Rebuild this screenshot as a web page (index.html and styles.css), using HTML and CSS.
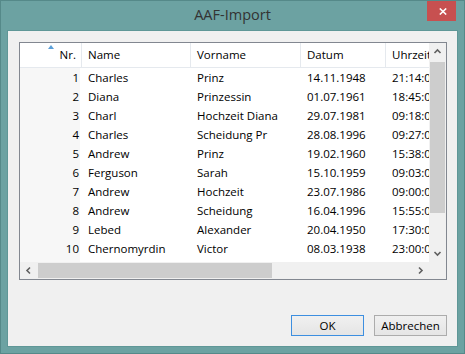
FILE: index.html
```html
<!DOCTYPE html>
<html>
<head>
<meta charset="utf-8">
<link rel="stylesheet" href="styles.css">
</head>
<body>
<div class="window">
  <div class="titlebar">
    <span class="title">AAF-Import</span>
    <button class="close" aria-label="Schließen">
      <svg width="8" height="7" viewBox="0 0 8 7"><path d="M0.8 0.5 L7.2 6.5 M7.2 0.5 L0.8 6.5" stroke="#fff" stroke-width="1.6" fill="none"/></svg>
    </button>
  </div>
  <div class="client">
    <div class="list">
      <div class="list-main">
        <div class="viewport">
          <div class="row header">
            <div class="cell nr">Nr.<span class="sort"></span></div>
            <div class="cell">Name</div>
            <div class="cell">Vorname</div>
            <div class="cell">Datum</div>
            <div class="cell">Uhrzeit</div>
          </div>
          <div class="row"><div class="cell nr">1</div><div class="cell">Charles</div><div class="cell">Prinz</div><div class="cell">14.11.1948</div><div class="cell">21:14:00</div></div>
          <div class="row"><div class="cell nr">2</div><div class="cell">Diana</div><div class="cell">Prinzessin</div><div class="cell">01.07.1961</div><div class="cell">18:45:00</div></div>
          <div class="row"><div class="cell nr">3</div><div class="cell">Charl</div><div class="cell">Hochzeit Diana</div><div class="cell">29.07.1981</div><div class="cell">09:18:00</div></div>
          <div class="row"><div class="cell nr">4</div><div class="cell">Charles</div><div class="cell">Scheidung Pr</div><div class="cell">28.08.1996</div><div class="cell">09:27:00</div></div>
          <div class="row"><div class="cell nr">5</div><div class="cell">Andrew</div><div class="cell">Prinz</div><div class="cell">19.02.1960</div><div class="cell">15:38:00</div></div>
          <div class="row"><div class="cell nr">6</div><div class="cell">Ferguson</div><div class="cell">Sarah</div><div class="cell">15.10.1959</div><div class="cell">09:03:00</div></div>
          <div class="row"><div class="cell nr">7</div><div class="cell">Andrew</div><div class="cell">Hochzeit</div><div class="cell">23.07.1986</div><div class="cell">09:00:00</div></div>
          <div class="row"><div class="cell nr">8</div><div class="cell">Andrew</div><div class="cell">Scheidung</div><div class="cell">16.04.1996</div><div class="cell">15:55:00</div></div>
          <div class="row"><div class="cell nr">9</div><div class="cell">Lebed</div><div class="cell">Alexander</div><div class="cell">20.04.1950</div><div class="cell">17:30:00</div></div>
          <div class="row"><div class="cell nr">10</div><div class="cell">Chernomyrdin</div><div class="cell">Victor</div><div class="cell">08.03.1938</div><div class="cell">23:00:00</div></div>
          <div class="row"><div class="cell nr">11</div><div class="cell"></div><div class="cell"></div><div class="cell"></div><div class="cell"></div></div>
        </div>
        <div class="vscroll">
          <div class="arrow"><svg width="9" height="9" viewBox="0 0 9 9"><polyline points="1.5,6 4.5,3 7.5,6" fill="none" stroke="#606060" stroke-width="1.6"/></svg></div>
          <div class="vtrack"><div class="vthumb"></div></div>
          <div class="arrow"><svg width="9" height="9" viewBox="0 0 9 9"><polyline points="1.5,3 4.5,6 7.5,3" fill="none" stroke="#606060" stroke-width="1.6"/></svg></div>
        </div>
      </div>
      <div class="hbar">
        <div class="hscroll">
          <div class="arrow"><svg width="9" height="9" viewBox="0 0 9 9"><polyline points="6,1.5 3,4.5 6,7.5" fill="none" stroke="#606060" stroke-width="1.6"/></svg></div>
          <div class="htrack"><div class="hthumb"></div></div>
          <div class="arrow"><svg width="9" height="9" viewBox="0 0 9 9"><polyline points="3,1.5 6,4.5 3,7.5" fill="none" stroke="#606060" stroke-width="1.6"/></svg></div>
        </div>
        <div class="corner"></div>
      </div>
    </div>
    <div class="buttons">
      <button class="btn default">OK</button>
      <button class="btn">Abbrechen</button>
    </div>
  </div>
</div>
</body>
</html>
```
FILE: styles.css
```css
html, body {
  margin: 0;
  padding: 0;
  background: #6ca2a2;
}
body {
  font-family: "Open Sans", "Noto Sans", sans-serif;
  font-size: 11.5px;
  color: #000;
}
* { box-sizing: border-box; }

.window {
  width: 465px;
  height: 354px;
  background: #6ca2a2;
  box-shadow: inset 0 0 0 1px #558989;
  display: flex;
  flex-direction: column;
  padding: 0 8px 8px;
}

.titlebar {
  height: 31px;
  flex: none;
  display: grid;
  grid-template-columns: 1fr auto 1fr;
}
.title {
  grid-column: 2;
  font-size: 14.5px;
  line-height: 30px;
  color: #333;
}
.close {
  grid-column: 3;
  justify-self: end;
  align-self: start;
  margin: 1px 1px 0 0;
  width: 29px;
  height: 20px;
  padding: 0 0 0 2px;
  border: 0;
  background: #c75050;
  display: flex;
  align-items: center;
  justify-content: center;
}
.close svg { display: block; margin-top: 1px; }

.client {
  flex: 1;
  background: #f0f0f0;
  box-shadow: 0 0 0 1px #5f9797;
  display: flex;
  flex-direction: column;
  padding: 11px 10px 10px 11px;
}

.list {
  height: 238px;
  border: 1px solid #828790;
  background: #fff;
  display: flex;
  flex-direction: column;
}
.list-main {
  display: flex;
  height: 219px;
}
.viewport {
  width: 409px;
  overflow: hidden;
}
.row {
  display: grid;
  grid-template-columns: 62px 109px 110px 85px 140px;
  width: 506px;
  height: 19px;
  line-height: 19px;
  white-space: nowrap;
}
.cell {
  padding-left: 6px;
  overflow: hidden;
}
.row:not(.header) .cell {
  margin-right: 2px;
}
.row .nr {
  text-align: right;
  padding: 0 1px 0 0;
  background: #f7f7f7;
}
.row.header {
  height: 25px;
  line-height: 24px;
  border-bottom: 1px solid #e5e9ee;
}
.header .cell {
  border-right: 1px solid #e5e9ee;
  background: #fff;
}
.header .nr {
  position: relative;
  padding-right: 5px;
  background: #fff;
}
.sort {
  position: absolute;
  top: 2px;
  left: 28px;
  width: 0;
  height: 0;
  border-left: 3.5px solid transparent;
  border-right: 3.5px solid transparent;
  border-bottom: 4px solid #5a9fd8;
}

.vscroll {
  width: 17px;
  background: #f0f0f0;
  display: flex;
  flex-direction: column;
}
.arrow {
  width: 17px;
  height: 17px;
  flex: none;
  display: flex;
  align-items: center;
  justify-content: center;
}
.vtrack {
  flex: 1;
  padding: 2px 1px 0 1px;
}
.vthumb {
  height: 151px;
  background: #cdcdcd;
}
.hbar {
  display: flex;
  height: 17px;
}
.hscroll {
  width: 409px;
  background: #f0f0f0;
  display: flex;
}
.htrack {
  flex: 1;
  padding: 1px 0 1px 1px;
}
.hthumb {
  width: 234px;
  height: 100%;
  background: #cdcdcd;
}
.corner {
  width: 17px;
  background: #f0f0f0;
}

.buttons {
  margin-top: auto;
  display: flex;
  justify-content: flex-end;
  gap: 10px;
}
.btn {
  width: 73px;
  height: 21px;
  padding: 0;
  border: 1px solid #acacac;
  background: linear-gradient(#f0f0f0, #e5e5e5);
  font-family: "Open Sans", "Noto Sans", sans-serif;
  font-size: 11.5px;
  color: #000;
  line-height: 19px;
}
.btn.default {
  border-color: #3d8fe0;
}
```
